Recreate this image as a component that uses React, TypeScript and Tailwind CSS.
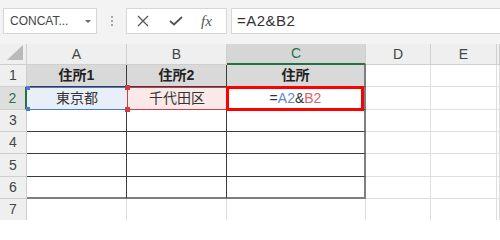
import type { ReactNode } from 'react'

const FONT = "font-['Liberation_Sans','Noto_Sans_CJK_JP',sans-serif]"

const HEAD = 'flex items-center justify-center border-r border-b border-[#cfcfcf] bg-[#efefef] text-[14px] text-[#444]'
const LIGHT = 'border-r border-b border-[#dedede] bg-white'
const DARK = 'border-r border-b border-[#3c3c3c] bg-white'
const DARK_C = 'border-r-2 border-r-[#7f7f7f] border-b border-b-[#3c3c3c] bg-white'
const DARK_LAST = 'border-r border-r-[#3c3c3c] border-b-2 border-b-[#7f7f7f] bg-white'
const DARK_C_LAST = 'border-r-2 border-b-2 border-[#7f7f7f] bg-white'
const TITLE = 'flex items-center justify-center border-r border-b border-[#3c3c3c] bg-[#d9d9d9] text-[14px] font-bold text-[#222]'

function Cell({ className, children }: { className: string; children?: ReactNode }) {
  return <div className={`box-border min-w-0 ${className}`}>{children}</div>
}

function RowHead({ n, selected }: { n: number; selected?: boolean }) {
  if (selected) {
    return (
      <Cell className="flex items-center justify-center border-b border-b-[#cfcfcf] border-r-2 border-r-[#217346] bg-[#dedede] text-[14px] text-[#217346]">
        {n}
      </Cell>
    )
  }
  return <Cell className={HEAD}>{n}</Cell>
}

function Toolbar() {
  return (
    <div className="flex h-[44px] items-start bg-[#f3f3f3] pt-[8px]">
      <div className="ml-[3px] flex h-[26px] w-[94px] items-center justify-between border border-[#d6d6d6] bg-white pl-[6px] pr-[5px]">
        <span className="text-[12px] text-[#444]">CONCAT...</span>
        <span className="h-0 w-0 border-x-[3px] border-t-[3px] border-x-transparent border-t-[#666]" />
      </div>
      <div className="ml-[14px] mt-[8px] flex w-[2px] flex-col gap-[2px]">
        <span className="h-[2px] w-[2px] bg-[#a6a6a6]" />
        <span className="h-[2px] w-[2px] bg-[#a6a6a6]" />
        <span className="h-[2px] w-[2px] bg-[#a6a6a6]" />
      </div>
      <div className="ml-[13px] flex h-[26px] w-[101px] items-center border border-[#d6d6d6] bg-white">
        <svg width="12" height="12" viewBox="0 0 12 12" className="ml-[10px]">
          <path d="M1 1 L11 11 M11 1 L1 11" stroke="#555" strokeWidth="1.3" fill="none" />
        </svg>
        <svg width="14" height="10" viewBox="0 0 14 10" className="ml-[20px]">
          <path d="M1 5 L5 8.5 L13 1" stroke="#555" strokeWidth="1.8" fill="none" />
        </svg>
        <span className="ml-[18px] font-['Liberation_Serif',serif] text-[15px] italic text-[#555]">fx</span>
      </div>
      <div className="ml-[4px] flex h-[26px] flex-1 items-center border-y border-l border-[#d6d6d6] bg-white pl-[5px] text-[15px] tracking-[0.5px] text-[#333]">
        =A2&amp;B2
      </div>
    </div>
  )
}

export default function App() {
  const empties = [3, 4, 5]
  return (
    <div className={`h-[220px] w-[500px] overflow-hidden bg-white ${FONT}`}>
      <Toolbar />
      <div className="grid grid-cols-[27px_100px_100px_139px_65px_66px_1fr] grid-rows-[21px_22px_23px_22px_22px_23px_22px_22px]">
        {/* column headers */}
        <Cell className="relative border-r border-b border-[#cfcfcf] bg-[#efefef]">
          <svg width="18" height="16" viewBox="0 0 18 16" className="absolute bottom-[3px] right-[2px]">
            <path d="M17 0 L17 15 L1 15 Z" fill="#b9b9b9" />
          </svg>
        </Cell>
        <Cell className={HEAD}>A</Cell>
        <Cell className={HEAD}>B</Cell>
        <Cell className="flex items-center justify-center border-r border-r-[#cfcfcf] border-b-2 border-b-[#217346] bg-[#d6d6d6] text-[14px] text-[#217346]">
          C
        </Cell>
        <Cell className={HEAD}>D</Cell>
        <Cell className={HEAD}>E</Cell>
        <Cell className={HEAD}>{''}</Cell>

        {/* row 1 */}
        <RowHead n={1} />
        <Cell className={TITLE}>住所1</Cell>
        <Cell className={TITLE}>住所2</Cell>
        <Cell className="flex items-center justify-center border-r-2 border-r-[#7f7f7f] border-b border-b-[#3c3c3c] bg-[#d9d9d9] text-[14px] font-bold text-[#222]">
          住所
        </Cell>
        <Cell className={LIGHT} />
        <Cell className={LIGHT} />
        <Cell className={LIGHT} />

        {/* row 2 */}
        <RowHead n={2} selected />
        <Cell className="relative flex items-center justify-center border-y border-[#4a7bd0] bg-[#e8eff9] text-[14px] text-[#333]">
          東京都
          <span className="absolute -left-[1px] -top-[2px] z-10 h-[4px] w-[4px] bg-[#4a7bd0]" />
          <span className="absolute -bottom-[2px] -left-[1px] z-10 h-[4px] w-[4px] bg-[#4a7bd0]" />
        </Cell>
        <Cell className="relative flex items-center justify-center border border-[#d03c45] bg-[#fbe9ea] text-[14px] text-[#333]">
          千代田区
          <span className="absolute -left-[3px] -top-[3px] z-10 h-[5px] w-[5px] bg-[#d03c45]" />
          <span className="absolute -bottom-[3px] -left-[3px] z-10 h-[5px] w-[5px] bg-[#d03c45]" />
        </Cell>
        <Cell className={`relative flex items-center justify-center text-[14px] ${DARK_C}`}>
          <span className="text-[#333]">=</span>
          <span className="text-[#5b8ad8]">A2</span>
          <span className="text-[#333]">&amp;</span>
          <span className="text-[#e0606a]">B2</span>
          <span className="absolute -bottom-[2px] -left-[1px] right-0 -top-[1px] z-20 border-[3px] border-[#ff0000]" />
        </Cell>
        <Cell className={LIGHT} />
        <Cell className={LIGHT} />
        <Cell className={LIGHT} />

        {/* rows 3-5 */}
        {empties.map((n) => (
          <div key={n} className="contents">
            <RowHead n={n} />
            <Cell className={DARK} />
            <Cell className={DARK} />
            <Cell className={DARK_C} />
            <Cell className={LIGHT} />
            <Cell className={LIGHT} />
            <Cell className={LIGHT} />
          </div>
        ))}

        {/* row 6 */}
        <RowHead n={6} />
        <Cell className={DARK_LAST} />
        <Cell className={DARK_LAST} />
        <Cell className={DARK_C_LAST} />
        <Cell className={LIGHT} />
        <Cell className={LIGHT} />
        <Cell className={LIGHT} />

        {/* row 7 */}
        <RowHead n={7} />
        <Cell className={LIGHT} />
        <Cell className={LIGHT} />
        <Cell className={LIGHT} />
        <Cell className={LIGHT} />
        <Cell className={LIGHT} />
        <Cell className={LIGHT} />
      </div>
    </div>
  )
}
